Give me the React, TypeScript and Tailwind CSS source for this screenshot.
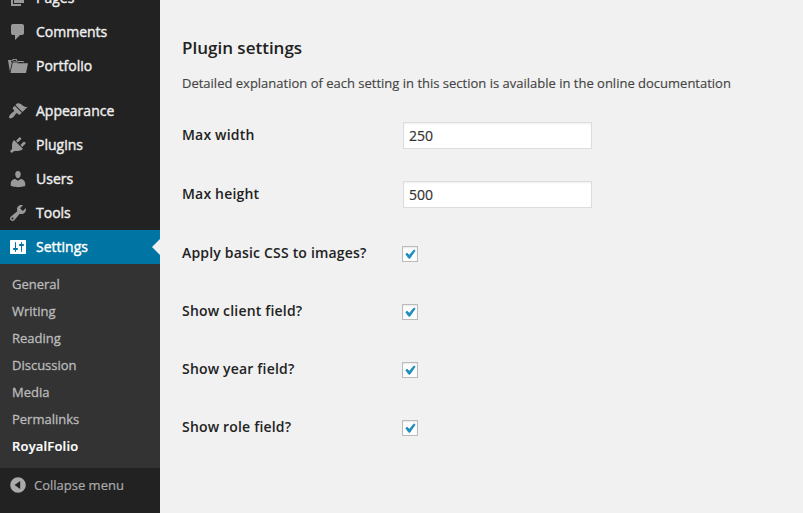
import React from "react";

const shapes: Record<string, string> = {
  page: "M6 15V2h10v13H6zm-1 1h8v2H3V5h2v11z",
  comments:
    "M5 2h9c1.1 0 2 .9 2 2v7c0 1.1-.9 2-2 2h-2l-5 5v-5H5c-1.1 0-2-.9-2-2V4c0-1.1.9-2 2-2z",
  appearance:
    "M14.48 11.06L7.41 3.99l1.5-1.5c.5-.56 2.3-.47 3.51.32 1.21.8 1.43 1.28 2.91 2.1 1.18.64 2.45 1.26 4.45.85zm-.71.71L6.7 4.7 4.93 6.47c-.39.39-.39 1.02 0 1.41l1.06 1.06c.39.39.39 1.03 0 1.42-.6.6-1.43 1.11-2.21 1.69-.35.26-.7.53-1.01.84C1.43 14.23.4 16.08 1.4 17.07c.99 1 2.84-.03 4.18-1.36.31-.31.58-.66.85-1.02.57-.78 1.08-1.61 1.69-2.21.39-.39 1.02-.39 1.41 0l1.06 1.06c.39.39 1.02.39 1.41 0z",
  plugins:
    "M13.11 4.36L9.87 7.6 8 5.73l3.24-3.24c.35-.34 1.05-.2 1.56.32.52.51.66 1.21.31 1.55zm-8 1.77l.91-1.12 9.01 9.01-1.19.84c-.71.71-2.63 1.16-3.82 1.16H6.14L4.9 17.26c-.59.59-1.54.59-2.12 0-.59-.58-.59-1.53 0-2.12l1.24-1.24v-3.88c0-1.13.4-3.19 1.09-3.89zm7.26 3.97l3.24-3.24c.34-.35 1.04-.21 1.55.31.52.51.66 1.21.31 1.55l-3.24 3.25z",
  users:
    "M10 9.25c-2.27 0-2.73-3.44-2.73-3.44C7 4.02 7.82 2 9.97 2c2.16 0 2.98 2.02 2.71 3.81 0 0-.41 3.44-2.68 3.44zm0 2.57L12.72 10c2.39 0 4.52 2.33 4.52 4.53v2.49s-3.65 1.13-7.24 1.13c-3.65 0-7.24-1.13-7.24-1.13v-2.49c0-2.25 1.94-4.48 4.47-4.48z",
  tools:
    "M16.68 9.77c-1.34 1.34-3.3 1.67-4.95.99l-5.41 6.52c-.99.99-2.59.99-3.58 0s-.99-2.59 0-3.57l6.52-5.42c-.68-1.65-.35-3.61.99-4.95 1.28-1.28 3.12-1.62 4.72-1.06l-2.89 2.89 2.82 2.82 2.86-2.87c.53 1.58.18 3.39-1.08 4.65zM3.81 16.21c.4.39 1.04.39 1.43 0 .4-.4.4-1.04 0-1.43-.39-.4-1.03-.4-1.43 0-.39.39-.39 1.03 0 1.43z",
  settings:
    "M18 16V4c0-.55-.45-1-1-1H3c-.55 0-1 .45-1 1v12c0 .55.45 1 1 1h14c.55 0 1-.45 1-1zM8 11h1c.55 0 1 .45 1 1s-.45 1-1 1H8v1.5c0 .28-.22.5-.5.5s-.5-.22-.5-.5V13H6c-.55 0-1-.45-1-1s.45-1 1-1h1V5.5c0-.28.22-.5.5-.5s.5.22.5.5V11zm5-2h-1c-.55 0-1-.45-1-1s.45-1 1-1h1V5.5c0-.28.22-.5.5-.5s.5.22.5.5V7h1c.55 0 1 .45 1 1s-.45 1-1 1h-1v5.5c0 .28-.22.5-.5.5s-.5-.22-.5-.5V9z",
  collapse:
    "M10 2.2a7.8 7.8 0 1 0 0 15.6 7.8 7.8 0 0 0 0-15.6zM12.2 6v8L6.6 10z",
};

function Icon({ name }: { name: string }) {
  return (
    <svg viewBox="0 0 20 20" className="size-5 shrink-0" fill="currentColor" fillRule="evenodd">
      {name === "portfolio" ? (
        <>
          <path d="M0 4.1h3.6v1H2.9l.9 1.6L1.9 15.6z" />
          <path d="M4.6 5.2V3.6h4.2v1.6M10 5.5h5.4l.3 1" fill="none" stroke="currentColor" strokeWidth="1" />
          <path d="M5 5.2h4.6l1.2 2h9.2l-2 9.8H2.4z" />
          <path d="M4.6 6.1h4.6l.9 1.6" fill="none" stroke="#222222" strokeWidth="0.6" />
        </>
      ) : (
        <path d={shapes[name]} />
      )}
    </svg>
  );
}

function MenuItem({ icon, label, active = false }: { icon: string; label: string; active?: boolean }) {
  return (
    <a
      className={
        "flex h-[34px] shrink-0 items-center gap-2 pl-2 text-sm [-webkit-text-stroke:0.4px_currentColor] " +
        (active ? "justify-between bg-[#0074a2] text-white" : "text-[#eeeeee]")
      }
    >
      <span className="flex items-center gap-2">
        <span className={active ? "text-white" : "text-[#999999]"}>
          <Icon name={icon} />
        </span>
        {label}
      </span>
      {active && <span className="border-y-8 border-r-8 border-y-transparent border-r-[#f1f1f1]" />}
    </a>
  );
}

const subItems = ["General", "Writing", "Reading", "Discussion", "Media", "Permalinks", "RoyalFolio"];

function Sidebar() {
  return (
    <nav className="flex w-40 shrink-0 flex-col overflow-hidden bg-[#222222]">
      <div className="-mt-[19px] flex flex-col">
        <MenuItem icon="page" label="Pages" />
        <MenuItem icon="comments" label="Comments" />
        <MenuItem icon="portfolio" label="Portfolio" />
      </div>
      <div className="mt-[11px] flex flex-col">
        <MenuItem icon="appearance" label="Appearance" />
        <MenuItem icon="plugins" label="Plugins" />
        <MenuItem icon="users" label="Users" />
        <MenuItem icon="tools" label="Tools" />
        <MenuItem icon="settings" label="Settings" active />
      </div>
      <ul className="bg-[#333333] pt-[7px] pb-2 pl-3 text-[13px] leading-[27px]">
        {subItems.map((item) => (
          <li
            key={item}
            className={
              item === "RoyalFolio"
                ? "font-semibold tracking-[0.2px] text-white [-webkit-text-stroke:0.2px_currentColor]"
                : "text-[#bbbbbb] [-webkit-text-stroke:0.3px_currentColor]"
            }
          >
            {item}
          </li>
        ))}
      </ul>
      <div className="flex h-[34px] items-center gap-1.5 pl-2 text-[13px] text-[#aaaaaa] [-webkit-text-stroke:0.2px_currentColor]">
        <Icon name="collapse" />
        <span className="pt-0.5">Collapse menu</span>
      </div>
    </nav>
  );
}

function Row({ label, value }: { label: string; value?: string }) {
  return (
    <div className={value ? "flex h-[59px] items-center" : "flex h-[58px] items-center"}>
      <span
        className={
          "w-[220px] text-sm font-semibold tracking-[0.18px] text-[#222222] " + (value ? "pb-0.5" : "")
        }
      >
        {label}
      </span>
      {value ? (
        <input
          readOnly
          value={value}
          className="ml-px h-[27px] w-[189px] border border-[#dddddd] bg-white px-[5px] text-sm text-[#333333] shadow-[inset_0_1px_2px_rgba(0,0,0,0.07)] outline-none [-webkit-text-stroke:0.2px_currentColor]"
        />
      ) : (
        <span className="mt-0.5 flex size-4 items-center justify-center border border-[#bbbbbb] bg-white text-[#1e8cbe] shadow-[inset_0_1px_2px_rgba(0,0,0,0.1)]">
          <svg viewBox="5 4 12 11" className="h-2.5 w-[11px]" fill="currentColor">
            <path
              d="M14.83 4.89l1.34.94-5.81 8.38H9.02L5.78 9.67l1.34-1.25 2.57 2.4z"
              stroke="currentColor"
              strokeWidth="0.8"
            />
          </svg>
        </span>
      )}
    </div>
  );
}

export default function App() {
  return (
    <div className="flex h-[513px] w-[803px] overflow-hidden bg-[#f1f1f1] font-['Open_Sans',sans-serif]">
      <Sidebar />
      <main className="flex flex-col pl-[22px]">
        <h3 className="mt-9 text-[17px] leading-6 font-semibold text-[#222222]">Plugin settings</h3>
        <p className="mt-[13px] text-[13px] leading-5 text-[#444444] [-webkit-text-stroke:0.15px_currentColor]">
          Detailed explanation of each setting in this section is available in the online documentation
        </p>
        <div className="mt-[13px] flex flex-col">
          <Row label="Max width" value="250" />
          <Row label="Max height" value="500" />
          <Row label="Apply basic CSS to images?" />
          <Row label="Show client field?" />
          <Row label="Show year field?" />
          <Row label="Show role field?" />
        </div>
      </main>
    </div>
  );
}
